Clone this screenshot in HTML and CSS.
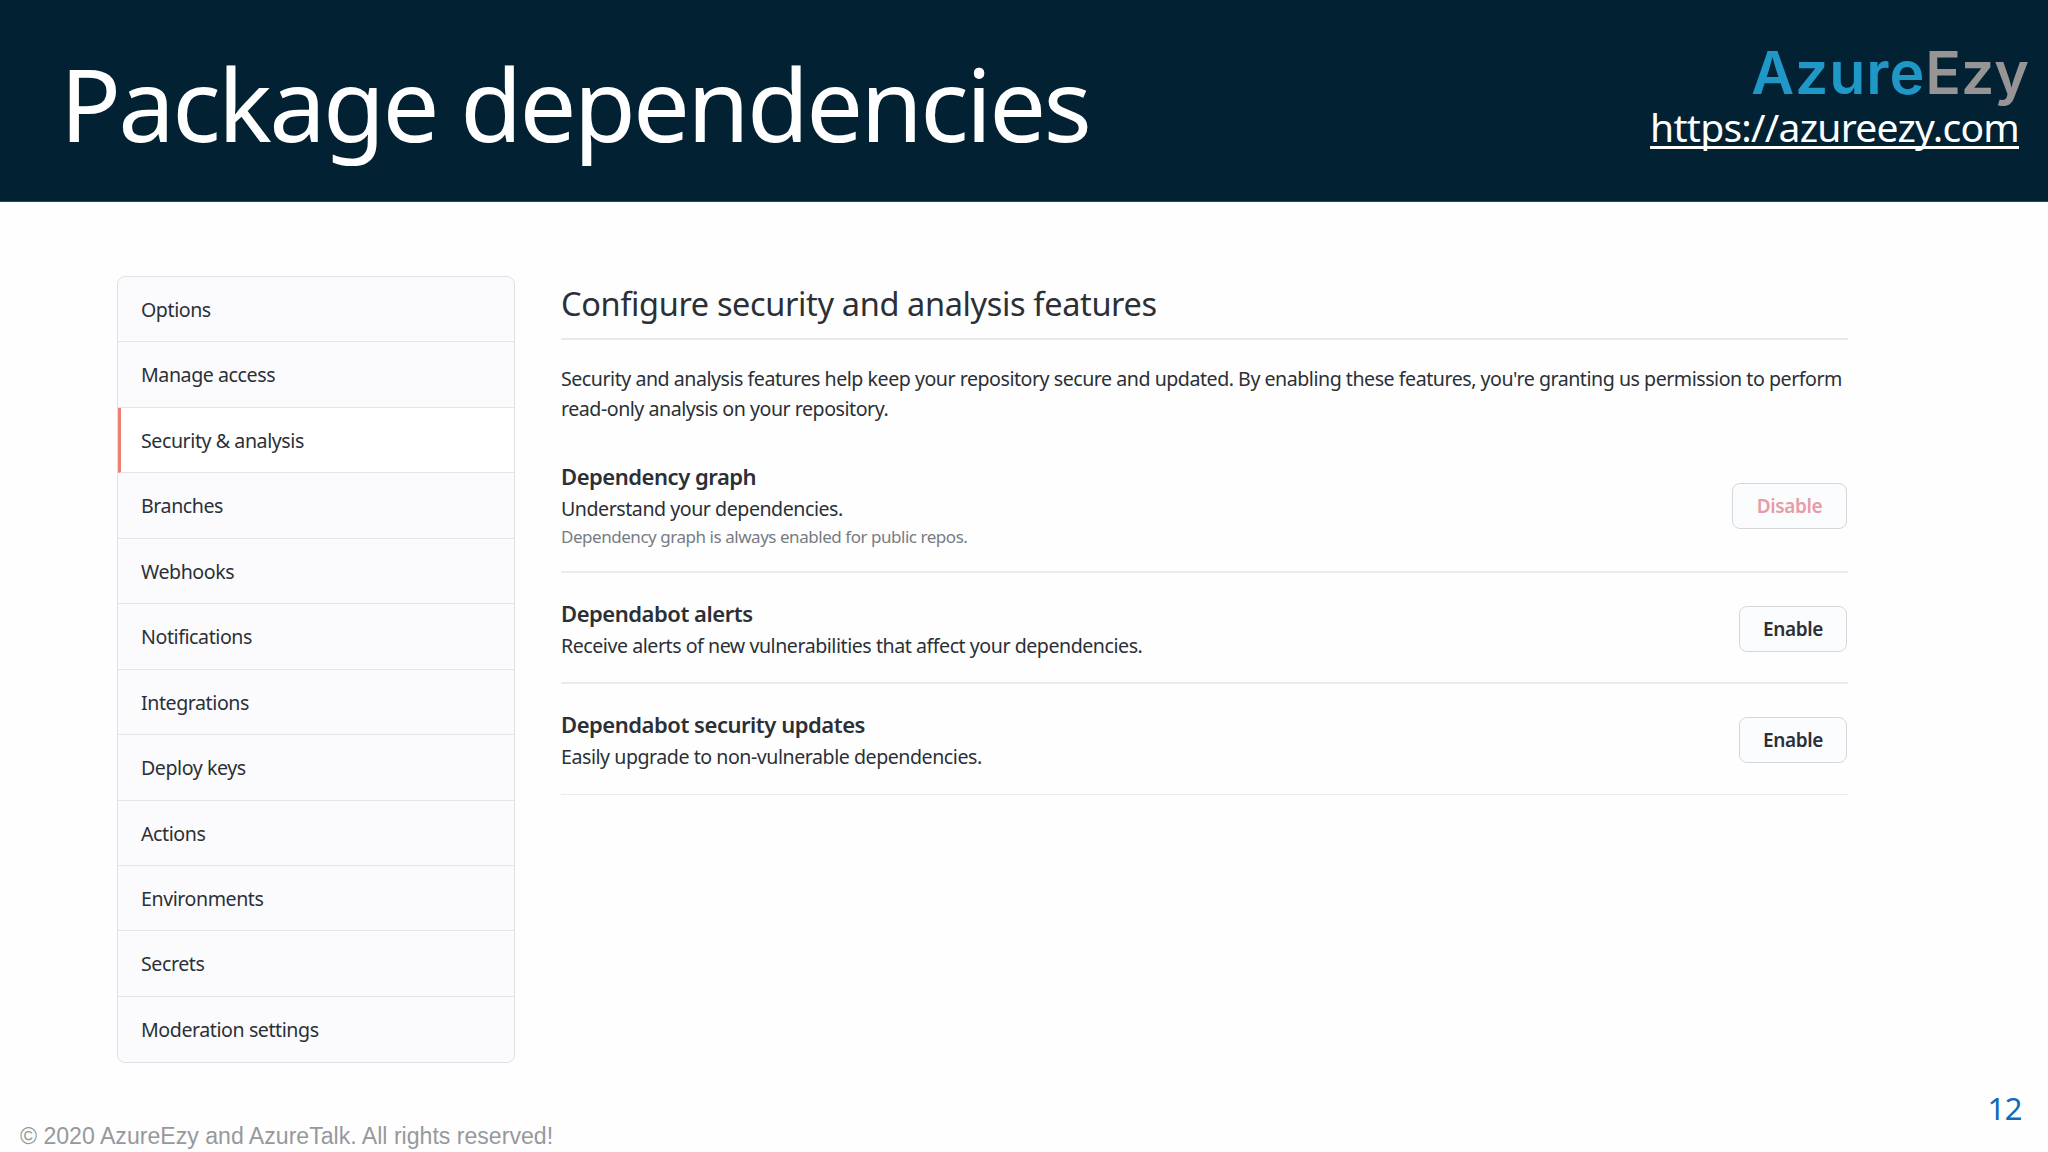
FILE: index.html
```html
<!DOCTYPE html>
<html lang="en">
  <head>
    <meta charset="UTF-8" />
    <title>Package dependencies</title>
    <link rel="stylesheet" href="styles.css">
  </head>
  <body>
    <header class="header">
      <h1 class="title">Package dependencies</h1>
      <div class="brand">
        <div class="logo"><span class="logo-azure">Azure</span><span class="logo-ezy">Ezy</span></div>
        <a class="site-link" href="#">https://azureezy.com</a>
      </div>
    </header>

    <main class="main">
      <nav class="menu">
        <a class="menu-item">Options</a>
        <a class="menu-item">Manage access</a>
        <a class="menu-item selected">Security &amp; analysis</a>
        <a class="menu-item">Branches</a>
        <a class="menu-item">Webhooks</a>
        <a class="menu-item">Notifications</a>
        <a class="menu-item">Integrations</a>
        <a class="menu-item">Deploy keys</a>
        <a class="menu-item">Actions</a>
        <a class="menu-item">Environments</a>
        <a class="menu-item">Secrets</a>
        <a class="menu-item">Moderation settings</a>
      </nav>

      <section class="settings">
        <h2 class="settings-title">Configure security and analysis features</h2>
        <p class="intro">
          Security and analysis features help keep your repository secure and updated. By enabling these features, you're granting us permission to perform<br />
          read-only analysis on your repository.
        </p>

        <div class="feature feature-graph">
          <div>
            <h3>Dependency graph</h3>
            <p>Understand your dependencies.</p>
            <p class="note">Dependency graph is always enabled for public repos.</p>
          </div>
          <button class="btn btn-danger" disabled>Disable</button>
        </div>
        <div class="feature">
          <div>
            <h3>Dependabot alerts</h3>
            <p>Receive alerts of new vulnerabilities that affect your dependencies.</p>
          </div>
          <button class="btn">Enable</button>
        </div>
        <div class="feature feature-last">
          <div>
            <h3>Dependabot security updates</h3>
            <p>Easily upgrade to non-vulnerable dependencies.</p>
          </div>
          <button class="btn">Enable</button>
        </div>
      </section>
    </main>

    <footer class="footer">
      <span class="copyright">© 2020 AzureEzy and AzureTalk. All rights reserved!</span>
      <span class="page-number">12</span>
    </footer>
  </body>
</html>
```
FILE: styles.css
```css
* {
  box-sizing: border-box;
}
body {
  margin: 0;
  width: 2048px;
  height: 1152px;
  overflow: hidden;
  display: flex;
  flex-direction: column;
  background-color: #fefefe;
  color: #2b3036;
  font-family: "Noto Sans", "Open Sans", sans-serif;
}
h1, h2, h3, p {
  margin: 0;
}

/* Header */
.header {
  height: 202px;
  padding: 0 21px 0 60px;
  display: flex;
  justify-content: space-between;
  background-color: #022234;
  border-bottom: 1px solid #2b4656;
  color: #fff;
}
.title {
  font-size: 101px;
  line-height: 206px;
  font-weight: 400;
  letter-spacing: -2.75px;
  white-space: nowrap;
}
.brand {
  padding-top: 37px;
  display: flex;
  flex-direction: column;
  align-items: flex-end;
}
.logo {
  margin-right: -2px;
  font-family: Inter, sans-serif;
  font-size: 59px;
  line-height: 72px;
  font-weight: 600;
}
.logo-azure {
  color: #1f97c7;
  letter-spacing: 0.9px;
}
.logo-ezy {
  color: #969495;
}
.site-link {
  margin-right: 8px;
  font-size: 39px;
  line-height: 36px;
  letter-spacing: -0.73px;
  color: #fff;
  text-decoration: underline;
  text-decoration-thickness: 3px;
  text-underline-offset: 4px;
  text-decoration-skip-ink: none;
}

/* Content */
.main {
  flex: 1;
  padding: 74px 200px 0 117px;
  display: flex;
  align-items: flex-start;
  gap: 46px;
}
.menu {
  flex: none;
  width: 398px;
  border: 1px solid #dfe1e6;
  border-radius: 8px;
  background-color: #fbfbfe;
  overflow: hidden;
}
.menu-item {
  display: block;
  height: 65.45px;
  padding-left: 23px;
  border-bottom: 1px solid #e4e5ea;
  font-size: 19.6px;
  line-height: 66px;
  letter-spacing: -0.43px;
}
.menu-item:last-child {
  border-bottom: none;
}
.menu-item.selected {
  padding-left: 20px;
  border-left: 3px solid #ec8073;
  background-color: #fff;
}
.settings {
  flex: 1;
}
.settings-title {
  padding-bottom: 7px;
  border-bottom: 2px solid #e9e9ed;
  font-size: 32.5px;
  line-height: 55px;
  font-weight: 400;
  letter-spacing: -0.36px;
}
.intro {
  margin-top: 24px;
  font-size: 19.6px;
  line-height: 30px;
  letter-spacing: -0.47px;
  white-space: nowrap;
}
.feature {
  padding: 24px 0 22px;
  display: flex;
  align-items: center;
  justify-content: space-between;
  border-bottom: 2px solid #ebebee;
}
.feature-graph {
  padding: 36px 0 20px;
}
.feature-last {
  padding-bottom: 23px;
  border-bottom: 1px solid #ebebee;
}
.feature h3 {
  margin-bottom: 2px;
  font-size: 22px;
  line-height: 32px;
  font-weight: 600;
  letter-spacing: -0.47px;
}
.feature p {
  font-size: 19.6px;
  line-height: 29px;
  letter-spacing: -0.46px;
}
.feature .note {
  font-size: 17px;
  line-height: 28px;
  color: #777c83;
}
.btn {
  width: 108px;
  height: 46px;
  margin-right: 1px;
  padding: 0;
  border: 1px solid #d5d7db;
  border-radius: 8px;
  background-color: #fbfcfe;
  color: #2b3036;
  font-family: inherit;
  font-size: 19px;
  font-weight: 600;
  letter-spacing: -0.4px;
}
.btn-danger {
  width: 115px;
  color: #e79ba6;
}

/* Footer */
.footer {
  height: 70px;
  padding: 0 26px 0 20px;
  display: flex;
  justify-content: space-between;
}
.copyright {
  font-family: "Liberation Sans", Arial, sans-serif;
  font-size: 23.1px;
  line-height: 108px;
  color: #96999c;
}
.page-number {
  font-size: 31px;
  line-height: 53px;
  letter-spacing: -0.5px;
  color: #1269b8;
}
```
